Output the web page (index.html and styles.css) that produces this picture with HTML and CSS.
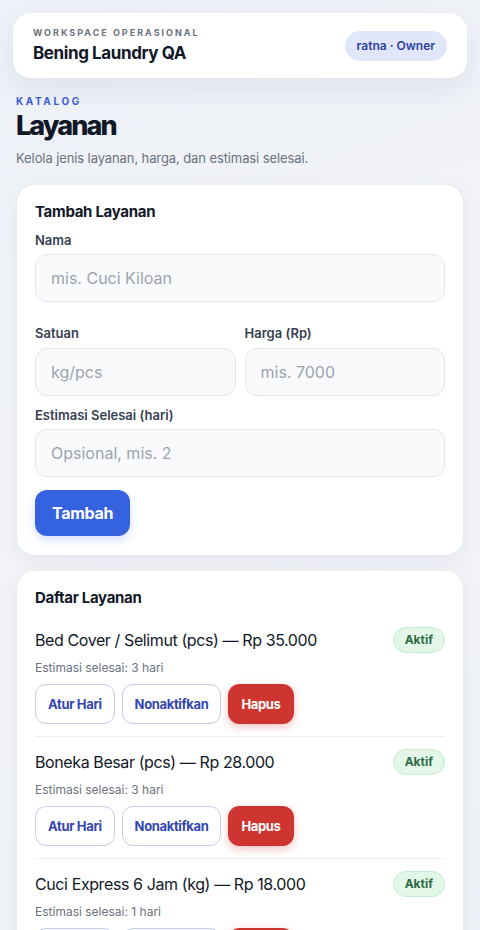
FILE: index.html
```html
<!DOCTYPE html>
<html lang="id">
<head>
    <meta charset="UTF-8">
    <meta name="viewport" content="width=device-width, initial-scale=1.0">
    <title>Layanan - Bening Laundry QA</title>
    <link rel="stylesheet" href="styles.css">
</head>
<body>
    <header class="topbar">
        <div class="topbar-card">
            <div>
                <div class="eyebrow">Workspace Operasional</div>
                <div class="workspace-name">Bening Laundry QA</div>
            </div>
            <span class="user-pill">ratna · Owner</span>
        </div>
    </header>

    <main class="page">
        <div class="page-head">
            <div class="kicker">Katalog</div>
            <h1>Layanan</h1>
            <p class="lead">Kelola jenis layanan, harga, dan estimasi selesai.</p>
        </div>

        <section class="card">
            <h2>Tambah Layanan</h2>
            <div class="field field-wide">
                <label for="nama">Nama</label>
                <input id="nama" type="text" placeholder="mis. Cuci Kiloan">
            </div>
            <div class="field-row">
                <div class="field">
                    <label for="satuan">Satuan</label>
                    <input id="satuan" type="text" placeholder="kg/pcs">
                </div>
                <div class="field">
                    <label for="harga">Harga (Rp)</label>
                    <input id="harga" type="text" placeholder="mis. 7000">
                </div>
            </div>
            <div class="field">
                <label for="estimasi">Estimasi Selesai (hari)</label>
                <input id="estimasi" type="text" placeholder="Opsional, mis. 2">
            </div>
            <button class="btn-primary">Tambah</button>
        </section>

        <section class="card">
            <h2>Daftar Layanan</h2>
            <ul class="service-list">
                <li class="service">
                    <div class="service-top">
                        <span class="service-name">Bed Cover / Selimut (pcs) — Rp 35.000</span>
                        <span class="status">Aktif</span>
                    </div>
                    <div class="service-meta">Estimasi selesai: 3 hari</div>
                    <div class="actions">
                        <button class="btn-outline">Atur Hari</button>
                        <button class="btn-outline">Nonaktifkan</button>
                        <button class="btn-danger">Hapus</button>
                    </div>
                </li>
                <li class="service">
                    <div class="service-top">
                        <span class="service-name">Boneka Besar (pcs) — Rp 28.000</span>
                        <span class="status">Aktif</span>
                    </div>
                    <div class="service-meta">Estimasi selesai: 3 hari</div>
                    <div class="actions">
                        <button class="btn-outline">Atur Hari</button>
                        <button class="btn-outline">Nonaktifkan</button>
                        <button class="btn-danger">Hapus</button>
                    </div>
                </li>
                <li class="service">
                    <div class="service-top">
                        <span class="service-name">Cuci Express 6 Jam (kg) — Rp 18.000</span>
                        <span class="status">Aktif</span>
                    </div>
                    <div class="service-meta">Estimasi selesai: 1 hari</div>
                    <div class="actions">
                        <button class="btn-outline">Atur Hari</button>
                        <button class="btn-outline">Nonaktifkan</button>
                        <button class="btn-danger">Hapus</button>
                    </div>
                </li>
            </ul>
        </section>
    </main>
</body>
</html>
```

FILE: styles.css
```css
* {
    box-sizing: border-box;
}
html, body {
    height: 930px;
    overflow: hidden;
}
body {
    margin: 0;
    font-family: Inter, "Noto Sans", Arial, sans-serif;
    color: #111827;
    background: linear-gradient(160deg, #eef1f7 0%, #f1f3f8 50%, #eef1f6 100%);
}
.topbar {
    padding: 13px 13px 0;
}
.topbar-card {
    display: flex;
    justify-content: space-between;
    align-items: center;
    padding: 14px 20px;
    background: #fff;
    border-radius: 18px;
    box-shadow: 0 10px 28px rgba(30, 41, 80, 0.08);
}
.eyebrow {
    font-size: 9px;
    line-height: 12px;
    font-weight: 700;
    letter-spacing: 2px;
    text-transform: uppercase;
    color: #6b7280;
}
.workspace-name {
    margin-top: 3px;
    font-size: 17px;
    line-height: 22px;
    font-weight: 700;
    letter-spacing: -0.4px;
    color: #111827;
}
.user-pill {
    padding: 7px 12px;
    font-size: 12px;
    line-height: 16px;
    font-weight: 600;
    color: #2e43a3;
    background: #e1e7fa;
    border-radius: 999px;
}
.page {
    padding: 0 17px 30px;
}
.page-head {
    margin: 17px 0 18px -1px;
}
.kicker {
    font-size: 10px;
    line-height: 12px;
    font-weight: 700;
    letter-spacing: 2.6px;
    text-transform: uppercase;
    color: #3b5bd6;
}
h1 {
    margin: 3px 0 0;
    font-size: 27px;
    line-height: 32px;
    font-weight: 800;
    letter-spacing: -1.9px;
    color: #111827;
}
.lead {
    margin: 7px 0 0;
    font-size: 13px;
    line-height: 18px;
    letter-spacing: -0.1px;
    color: #6b7280;
}
.card {
    margin-bottom: 16px;
    padding: 17px 18px 19px;
    background: #fff;
    border-radius: 18px;
    box-shadow: 0 6px 20px rgba(30, 41, 80, 0.06);
}
h2 {
    margin: 0;
    font-size: 15px;
    line-height: 20px;
    font-weight: 700;
    letter-spacing: -0.3px;
    color: #111827;
}
.field {
    display: flex;
    flex-direction: column;
    gap: 5px;
    margin-top: 9px;
    min-width: 0;
}
.field-wide {
    margin-bottom: 22px;
}
.field-row {
    display: grid;
    grid-template-columns: 1fr 1fr;
    gap: 9px;
}
.field-row .field {
    margin-top: 0;
}
.field-row + .field {
    margin-top: 10px;
}
label {
    font-size: 13px;
    line-height: 18px;
    font-weight: 600;
    color: #374151;
}
.field-row label {
    margin-bottom: 1px;
}
input {
    width: 100%;
    min-width: 0;
    height: 48px;
    padding: 0 15px;
    font-family: inherit;
    font-size: 16px;
    color: #111827;
    background: #f8fafc;
    border: 1px solid #e2e6ee;
    border-radius: 12px;
}
input::placeholder {
    color: #9ca3af;
}
.btn-primary {
    margin-top: 13px;
    height: 46px;
    padding: 0 17px;
    font-family: inherit;
    font-size: 16px;
    font-weight: 700;
    letter-spacing: -0.3px;
    color: #fff;
    background: #3563e0;
    border: 0;
    border-radius: 12px;
    box-shadow: 0 4px 10px rgba(53, 99, 224, 0.2);
}
.service-list {
    list-style: none;
    margin: 7px 0 0;
    padding: 0;
}
.service {
    padding: 12px 0;
    border-bottom: 1px solid #eceef2;
}
.service-top {
    display: flex;
    justify-content: space-between;
    align-items: center;
}
.service-name {
    font-size: 16px;
    line-height: 22px;
    letter-spacing: -0.4px;
    color: #111827;
}
.status {
    height: 26px;
    padding: 0 11px;
    font-size: 12px;
    line-height: 24px;
    font-weight: 700;
    color: #2e6b45;
    background: #e3f7e8;
    border: 1px solid #c6ebd1;
    border-radius: 999px;
}
.service-meta {
    margin-top: 7px;
    font-size: 12px;
    line-height: 16px;
    color: #6b7280;
}
.actions {
    display: flex;
    gap: 7px;
    margin-top: 8px;
}
.actions button {
    height: 40px;
    padding: 0 12px;
    font-family: inherit;
    font-size: 13px;
    font-weight: 700;
    letter-spacing: -0.35px;
    border-radius: 11px;
}
.btn-outline {
    color: #3346b0;
    background: #fff;
    border: 1px solid #c5cdef;
}
.btn-danger {
    color: #fff;
    background: #cf3530;
    border: 1px solid #cf3530;
    box-shadow: 0 3px 8px rgba(207, 53, 48, 0.3);
}
```
